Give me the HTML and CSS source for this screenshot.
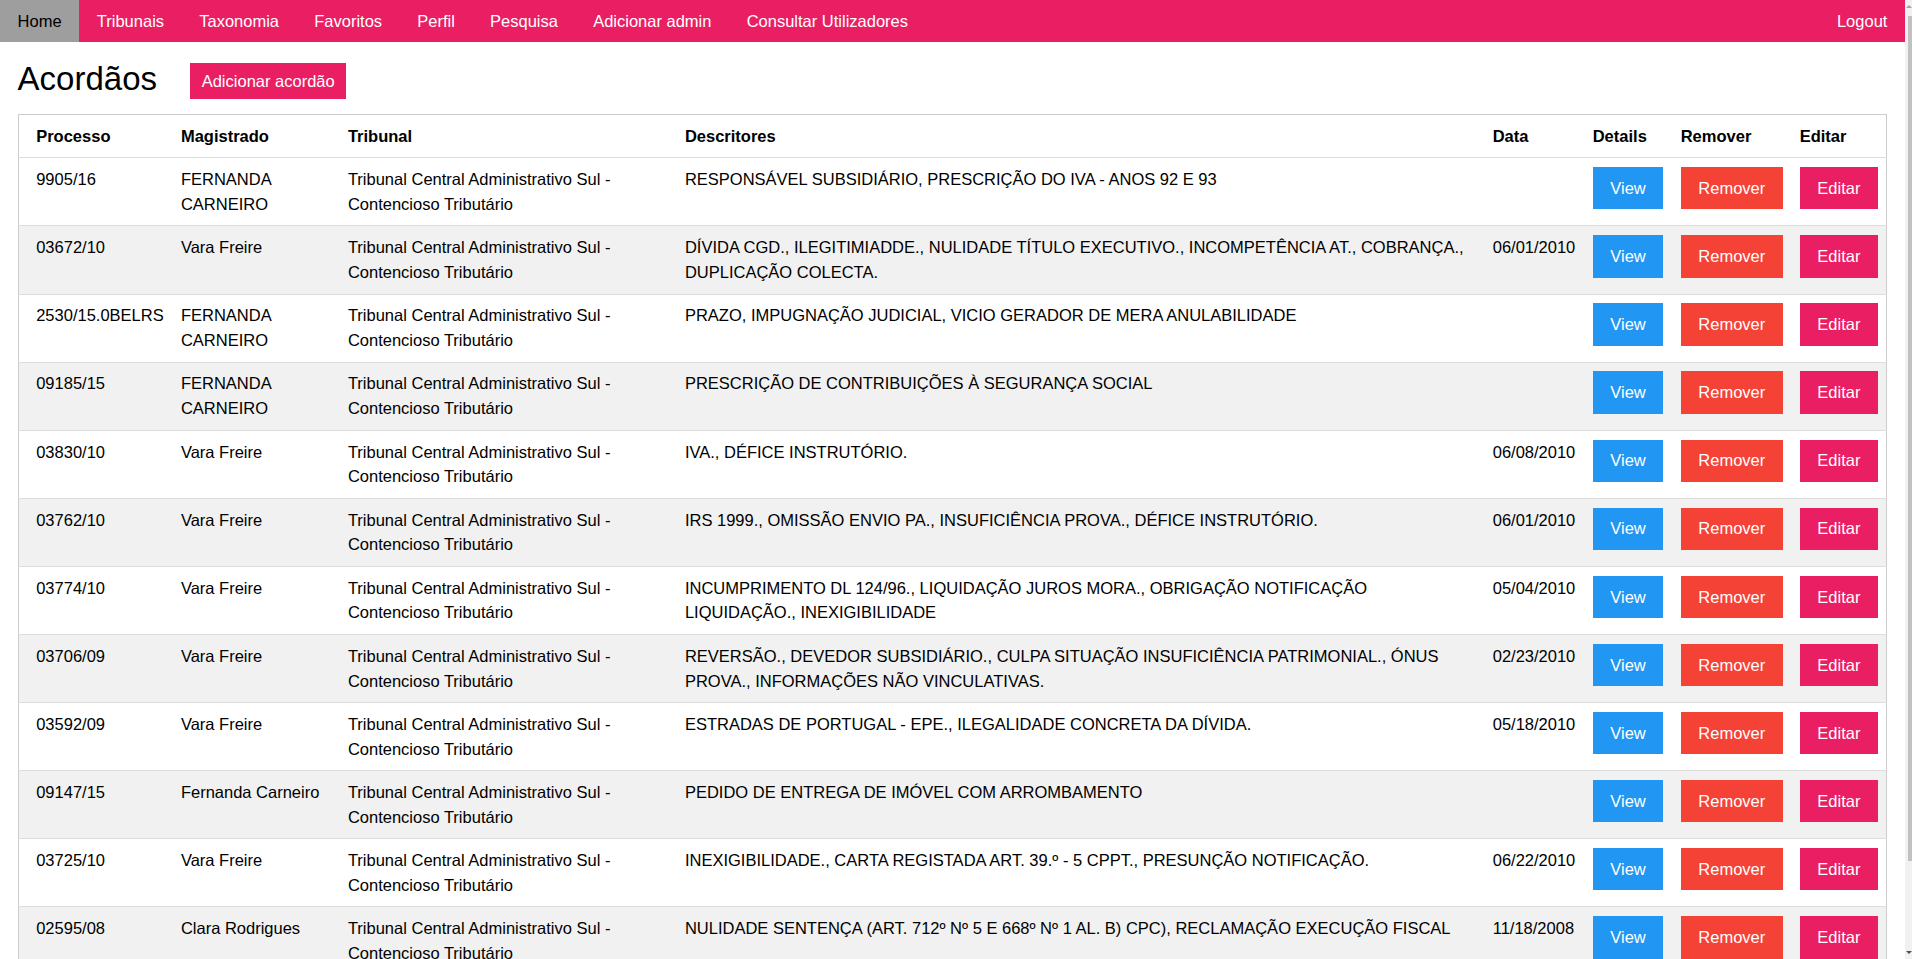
FILE: index.html
```html
<!DOCTYPE html>
<html lang="pt">
<head>
<meta charset="utf-8">
<title>Acordãos</title>
<link rel="stylesheet" href="styles.css">
</head>
<body>
<nav class="topbar">
  <a class="nav-item active" href="#">Home</a>
  <a class="nav-item" href="#">Tribunais</a>
  <a class="nav-item" href="#">Taxonomia</a>
  <a class="nav-item" href="#">Favoritos</a>
  <a class="nav-item" href="#">Perfil</a>
  <a class="nav-item" href="#">Pesquisa</a>
  <a class="nav-item" href="#">Adicionar admin</a>
  <a class="nav-item" href="#">Consultar Utilizadores</a>
  <a class="nav-item logout" href="#">Logout</a>
</nav>
<main class="container">
  <h2 class="page-title">Acordãos <a class="btn btn-add" href="#">Adicionar acordão</a></h2>
  <table class="table-all">
    <colgroup>
      <col class="c-proc"><col class="c-mag"><col class="c-trib"><col class="c-desc"><col class="c-data"><col class="c-det"><col class="c-rem"><col class="c-edit">
    </colgroup>
    <thead>
      <tr><th>Processo</th><th>Magistrado</th><th>Tribunal</th><th>Descritores</th><th>Data</th><th>Details</th><th>Remover</th><th>Editar</th></tr>
    </thead>
    <tbody>
      <tr><td>9905/16</td><td>FERNANDA CARNEIRO</td><td>Tribunal Central Administrativo Sul - Contencioso Tributário</td><td>RESPONSÁVEL SUBSIDIÁRIO, PRESCRIÇÃO DO IVA - ANOS 92 E 93</td><td></td><td><a class="btn btn-blue" href="#">View</a></td><td><a class="btn btn-red" href="#">Remover</a></td><td><a class="btn btn-pink" href="#">Editar</a></td></tr>
      <tr><td>03672/10</td><td>Vara Freire</td><td>Tribunal Central Administrativo Sul - Contencioso Tributário</td><td>DÍVIDA CGD., ILEGITIMIADDE., NULIDADE TÍTULO EXECUTIVO., INCOMPETÊNCIA AT., COBRANÇA., DUPLICAÇÃO COLECTA.</td><td>06/01/2010</td><td><a class="btn btn-blue" href="#">View</a></td><td><a class="btn btn-red" href="#">Remover</a></td><td><a class="btn btn-pink" href="#">Editar</a></td></tr>
      <tr><td>2530/15.0BELRS</td><td>FERNANDA CARNEIRO</td><td>Tribunal Central Administrativo Sul - Contencioso Tributário</td><td>PRAZO, IMPUGNAÇÃO JUDICIAL, VICIO GERADOR DE MERA ANULABILIDADE</td><td></td><td><a class="btn btn-blue" href="#">View</a></td><td><a class="btn btn-red" href="#">Remover</a></td><td><a class="btn btn-pink" href="#">Editar</a></td></tr>
      <tr><td>09185/15</td><td>FERNANDA CARNEIRO</td><td>Tribunal Central Administrativo Sul - Contencioso Tributário</td><td>PRESCRIÇÃO DE CONTRIBUIÇÕES À SEGURANÇA SOCIAL</td><td></td><td><a class="btn btn-blue" href="#">View</a></td><td><a class="btn btn-red" href="#">Remover</a></td><td><a class="btn btn-pink" href="#">Editar</a></td></tr>
      <tr><td>03830/10</td><td>Vara Freire</td><td>Tribunal Central Administrativo Sul - Contencioso Tributário</td><td>IVA., DÉFICE INSTRUTÓRIO.</td><td>06/08/2010</td><td><a class="btn btn-blue" href="#">View</a></td><td><a class="btn btn-red" href="#">Remover</a></td><td><a class="btn btn-pink" href="#">Editar</a></td></tr>
      <tr><td>03762/10</td><td>Vara Freire</td><td>Tribunal Central Administrativo Sul - Contencioso Tributário</td><td>IRS 1999., OMISSÃO ENVIO PA., INSUFICIÊNCIA PROVA., DÉFICE INSTRUTÓRIO.</td><td>06/01/2010</td><td><a class="btn btn-blue" href="#">View</a></td><td><a class="btn btn-red" href="#">Remover</a></td><td><a class="btn btn-pink" href="#">Editar</a></td></tr>
      <tr><td>03774/10</td><td>Vara Freire</td><td>Tribunal Central Administrativo Sul - Contencioso Tributário</td><td>INCUMPRIMENTO DL 124/96., LIQUIDAÇÃO JUROS MORA., OBRIGAÇÃO NOTIFICAÇÃO LIQUIDAÇÃO., INEXIGIBILIDADE</td><td>05/04/2010</td><td><a class="btn btn-blue" href="#">View</a></td><td><a class="btn btn-red" href="#">Remover</a></td><td><a class="btn btn-pink" href="#">Editar</a></td></tr>
      <tr><td>03706/09</td><td>Vara Freire</td><td>Tribunal Central Administrativo Sul - Contencioso Tributário</td><td>REVERSÃO., DEVEDOR SUBSIDIÁRIO., CULPA SITUAÇÃO INSUFICIÊNCIA PATRIMONIAL., ÓNUS PROVA., INFORMAÇÕES NÃO VINCULATIVAS.</td><td>02/23/2010</td><td><a class="btn btn-blue" href="#">View</a></td><td><a class="btn btn-red" href="#">Remover</a></td><td><a class="btn btn-pink" href="#">Editar</a></td></tr>
      <tr><td>03592/09</td><td>Vara Freire</td><td>Tribunal Central Administrativo Sul - Contencioso Tributário</td><td>ESTRADAS DE PORTUGAL - EPE., ILEGALIDADE CONCRETA DA DÍVIDA.</td><td>05/18/2010</td><td><a class="btn btn-blue" href="#">View</a></td><td><a class="btn btn-red" href="#">Remover</a></td><td><a class="btn btn-pink" href="#">Editar</a></td></tr>
      <tr><td>09147/15</td><td>Fernanda Carneiro</td><td>Tribunal Central Administrativo Sul - Contencioso Tributário</td><td>PEDIDO DE ENTREGA DE IMÓVEL COM ARROMBAMENTO</td><td></td><td><a class="btn btn-blue" href="#">View</a></td><td><a class="btn btn-red" href="#">Remover</a></td><td><a class="btn btn-pink" href="#">Editar</a></td></tr>
      <tr><td>03725/10</td><td>Vara Freire</td><td>Tribunal Central Administrativo Sul - Contencioso Tributário</td><td>INEXIGIBILIDADE., CARTA REGISTADA ART. 39.º - 5 CPPT., PRESUNÇÃO NOTIFICAÇÃO.</td><td>06/22/2010</td><td><a class="btn btn-blue" href="#">View</a></td><td><a class="btn btn-red" href="#">Remover</a></td><td><a class="btn btn-pink" href="#">Editar</a></td></tr>
      <tr><td>02595/08</td><td>Clara Rodrigues</td><td>Tribunal Central Administrativo Sul - Contencioso Tributário</td><td>NULIDADE SENTENÇA (ART. 712º Nº 5 E 668º Nº 1 AL. B) CPC), RECLAMAÇÃO EXECUÇÃO FISCAL</td><td>11/18/2008</td><td><a class="btn btn-blue" href="#">View</a></td><td><a class="btn btn-red" href="#">Remover</a></td><td><a class="btn btn-pink" href="#">Editar</a></td></tr>
    </tbody>
  </table>
</main>
<div class="scroll-track" aria-hidden="true">
  <span class="scroll-arrow up"></span>
  <span class="scroll-thumb"></span>
  <span class="scroll-arrow down"></span>
</div>
</body>
</html>
```

FILE: styles.css
```css
html {
  font-size: 16.5px;
}
body {
  margin: 0 7px 0 0;
  font-family: "Liberation Sans", Arial, sans-serif;
  font-size: 16.5px;
  line-height: 1.5;
  color: #000;
  background: #fff;
}
a {
  text-decoration: none;
}
.topbar {
  display: flex;
  background: #e91e63;
}
.nav-item {
  display: block;
  padding: 8.8px 17.6px;
  color: #fff;
  white-space: nowrap;
}
.nav-item.active {
  background: #9e9e9e;
  color: #000;
}
.nav-item.logout {
  margin-left: auto;
}
.container {
  padding: 0.01em 17.6px 17.6px;
}
.page-title {
  margin: 11px 0;
  font-size: 33px;
  font-weight: 400;
  line-height: 1.5;
}
.btn {
  display: inline-block;
  vertical-align: middle;
  padding: 8.8px 17.6px;
  color: #fff;
  font-size: 16.5px;
  white-space: nowrap;
}
.btn-add {
  margin-left: 24px;
  padding: 0 11.5px;
  height: 36px;
  line-height: 36px;
  background: #e91e63;
}
.btn-blue { background: #2196f3; }
.btn-red { background: #f44336; }
.btn-pink { background: #e91e63; }
.table-all {
  width: 100%;
  border-collapse: collapse;
  border-spacing: 0;
  border: 1px solid #ccc;
  table-layout: fixed;
}
.c-proc { width: 154px; }
.c-mag { width: 167px; }
.c-trib { width: 337px; }
.c-data { width: 100px; }
.c-det { width: 88px; }
.c-rem { width: 119px; }
.c-edit { width: 96px; }
.table-all tr {
  border-bottom: 1px solid #ddd;
}
.table-all tbody tr:nth-child(odd) { background: #fff; }
.table-all tbody tr:nth-child(even) { background: #f1f1f1; }
.table-all th,
.table-all td {
  padding: 8.8px;
  text-align: left;
  vertical-align: top;
}
.table-all th:first-child,
.table-all td:first-child {
  padding-left: 17.6px;
}
.table-all th {
  font-weight: 700;
}

/* scrollbar strip at the window's right edge */
.scroll-track {
  position: fixed;
  top: 0;
  right: 0;
  width: 7px;
  height: 100vh;
  background: #f1f1f1;
  display: flex;
  flex-direction: column;
  align-items: flex-end;
}
.scroll-arrow {
  height: 15px;
  width: 5px;
  position: relative;
}
.scroll-arrow.up::after,
.scroll-arrow.down::after {
  content: "";
  position: absolute;
  right: 0;
  border-left: 3px solid transparent;
  border-right: 3px solid transparent;
}
.scroll-arrow.up::after {
  top: 5px;
  border-bottom: 3px solid #a3a3a3;
}
.scroll-arrow.down::after {
  bottom: 5px;
  border-top: 3px solid #505050;
}
.scroll-thumb {
  width: 4.5px;
  height: 845px;
  margin-top: 1px;
  background: #c1c1c1;
}
.scroll-arrow.down {
  margin-top: auto;
}
```
